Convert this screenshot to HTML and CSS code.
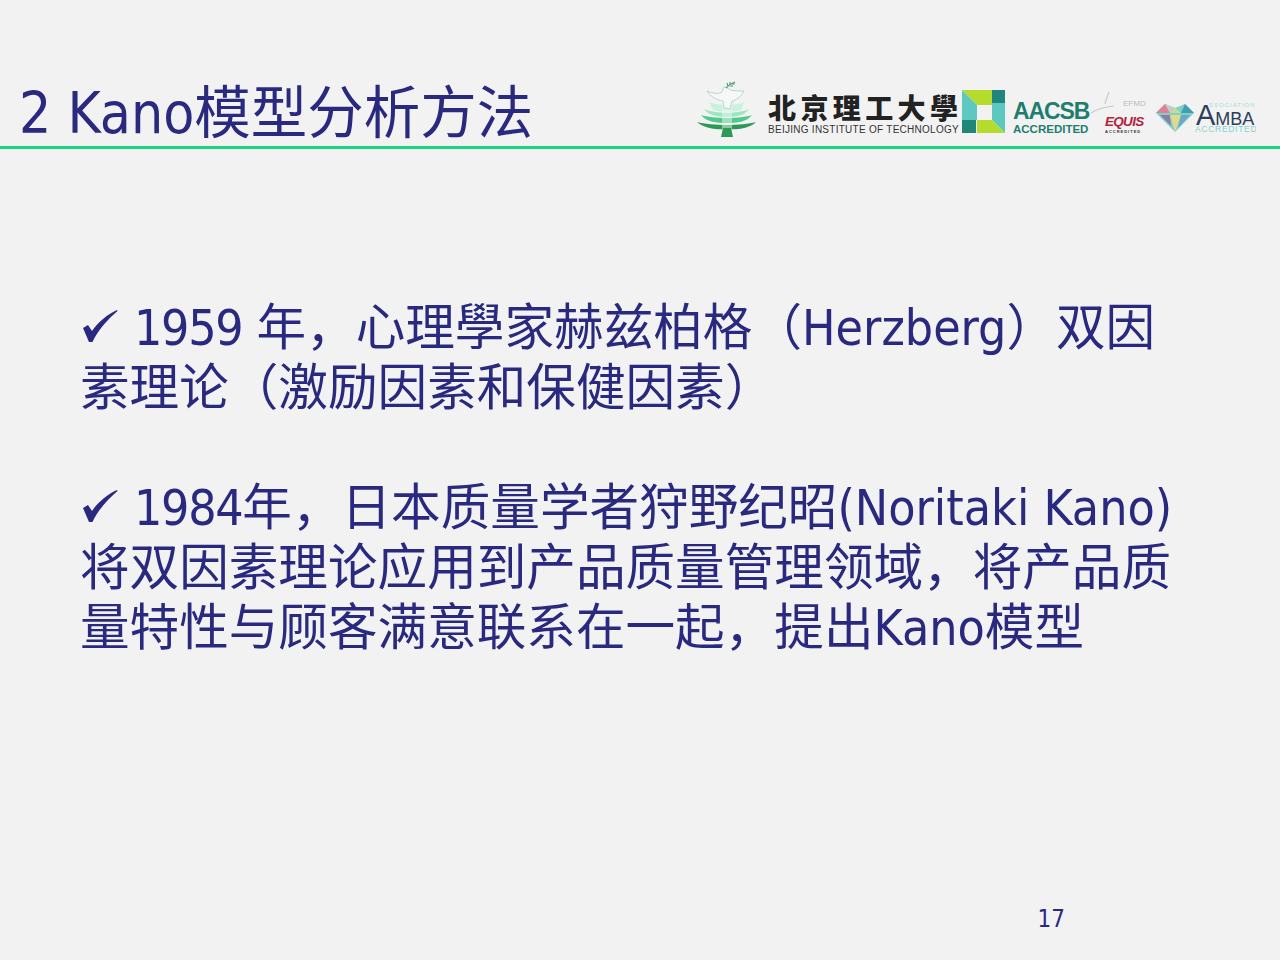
FILE: index.html
```html
<!DOCTYPE html>
<html lang="zh-CN">
<head>
    <meta charset="UTF-8">
    <title>2 Kano模型分析方法</title>
    <link rel="stylesheet" href="styles.css">
</head>
<body>
    <div class="slide">
        <header class="slide-header">
            <h1 class="slide-title">2 Kano模型分析方法</h1>
            <div class="logos">
                <!-- dove and pine tree -->
                <svg class="logo-tree" width="60" height="57" viewBox="0 0 60 57">
                    <path d="M12 21 C20 25 40 25 47 21 L44 29 C38 31 22 31 16 29 Z" fill="#c9f2de"/>
                    <path d="M7 28 C18 33 42 33 52 28 C48 34 40 36 30 36 C20 36 11 34 7 28 Z" fill="#9be6c0"/>
                    <path d="M4 34 C16 38 44 38 55 34 C50 41 40 42 30 42 C20 42 9 41 4 34 Z" fill="#4fca8c"/>
                    <path d="M0 41 C15 45 45 45 59 41 C52 48 38 49 30 48 C22 49 8 48 0 41 Z" fill="#2c9a55"/>
                    <rect x="25" y="24" width="10" height="24" fill="#eaf8f1" fill-opacity="0.5"/>
                    <path d="M26 47 L34 47 L36 56 L24 56 Z" fill="#2c9a55"/>
                    <path d="M10 10 C17 13 22 13 25 11 L27 6 L31 7 C32 10 40 10 47 10 C44 16 39 19 35 20 L33 28 L27 27 L26 20 C19 19 13 15 10 10 Z" fill="#f6f8f7" stroke="#a6cfc0" stroke-width="0.8"/>
                    <path d="M29 7 C32 4 35 2 38 1 M31 5 L30 2 M33 4 L33 1 M33 5 L36 5 M35 3 L38 3" stroke="#4f9f70" stroke-width="1.1" fill="none"/>
                </svg>
                <div class="logo-bit">
                    <div class="bit-cn">北京理工大學</div>
                    <div class="bit-en">BEIJING INSTITUTE OF TECHNOLOGY</div>
                </div>
                <svg class="logo-mark" width="43" height="43" viewBox="0 0 43 43">
                    <polygon points="0,0 30,0 30,15 15,15" fill="#b5dc2c"/>
                    <rect x="30" y="0" width="13" height="13" fill="#22857c"/>
                    <polygon points="30,13 43,13 43,43 30,30" fill="#5cc8c0"/>
                    <polygon points="15,30 30,30 43,43 15,43" fill="#b5dc2c"/>
                    <rect x="0" y="30" width="14" height="13" fill="#22857c"/>
                    <polygon points="0,0 15,15 15,30 0,30" fill="#5cc8c0"/>
                </svg>
                <div class="logo-aacsb">
                    <div class="aacsb-name">AACSB</div>
                    <div class="aacsb-sub">ACCREDITED</div>
                </div>
                <svg class="logo-equis" width="56" height="44" viewBox="0 0 56 44">
                    <path d="M1 23 C7 19 15 17 24 16 M15 14 C16 9 18 5 19 2" stroke="#c9c9c9" stroke-width="1.2" fill="none"/>
                    <text x="33" y="16" class="efmd-text">EFMD</text>
                    <text x="15" y="36" class="equis-text">EQUIS</text>
                    <text x="15" y="43" class="equis-sub">ACCREDITED</text>
                </svg>
                <svg class="logo-amba" width="100" height="32" viewBox="0 0 100 32">
                    <polygon points="0,12 9,3 19,7 29,3 38,12 19,31" fill="#7fd0c8"/>
                    <polygon points="0,12 9,3 14,12" fill="#e07f95"/>
                    <polygon points="9,3 19,7 14,12" fill="#c9c9c9"/>
                    <polygon points="14,12 19,7 25,12" fill="#c9dc8a"/>
                    <polygon points="25,12 29,3 38,12" fill="#3f9fb0"/>
                    <polygon points="4,14 14,14 15,25" fill="#8a7fa8"/>
                    <polygon points="14,14 25,14 19,31" fill="#e4d98a"/>
                    <polygon points="25,14 34,14 22,27" fill="#6aa8c8"/>
                    <text x="53" y="6" class="amba-small">SSOCIATION</text>
                    <text x="40" y="24" class="amba-name"><tspan class="amba-cap">A</tspan>MBA</text>
                    <text x="39" y="31" class="amba-sub">ACCREDITED</text>
                </svg>
            </div>
        </header>

        <main class="content">
            <p class="point">
                <svg class="check" width="54" height="36" viewBox="-3 0 54 36"><path d="M0 18 L5 15 L9 21 C15 12 25 4 34 0 L34.5 1 C25 9 15 20 9.5 32 L6 32 Z"/></svg><span class="num">1959</span> 年，心理學家赫兹柏格（Herzberg）双因素理论（激励因素和保健因素）
            </p>
            <p class="point">
                <svg class="check" width="54" height="36" viewBox="-3 0 54 36"><path d="M0 18 L5 15 L9 21 C15 12 25 4 34 0 L34.5 1 C25 9 15 20 9.5 32 L6 32 Z"/></svg><span class="num">1984</span>年，日本质量学者狩野纪昭(Noritaki Kano)将双因素理论应用到产品质量管理领域，将产品质量特性与顾客满意联系在一起，提出Kano模型
            </p>
        </main>

        <footer class="page-number">17</footer>
    </div>
</body>
</html>
```

FILE: styles.css
```css
body {
    margin: 0;
    background-color: #f2f2f2;
    color: #29297f;
    font-family: "DejaVu Sans Condensed", "Noto Sans CJK SC", sans-serif;
}
.slide {
    height: 960px;
    display: flex;
    flex-direction: column;
    overflow: hidden;
}
.slide-header {
    height: 146px;
    border-bottom: 3px solid #1bd680;
    display: flex;
    justify-content: space-between;
    align-items: flex-end;
    padding: 0 24px 0 19px;
}
.slide-title {
    margin: 0 0 -3px 0;
    font-size: 56.5px;
    font-weight: normal;
    line-height: 70px;
    height: 70px;
}
.logos {
    display: flex;
    align-items: flex-end;
    padding-bottom: 8px;
}
.logo-bit {
    margin-left: 11px;
    width: 194px;
    margin-bottom: 2px;
}
.bit-cn {
    font-family: "Noto Sans CJK SC", sans-serif;
    font-size: 28px;
    font-weight: 900;
    line-height: 32px;
    letter-spacing: 4.4px;
    color: #222;
    white-space: nowrap;
}
.bit-en {
    font-family: "Liberation Sans", sans-serif;
    font-size: 10px;
    line-height: 13px;
    letter-spacing: 0.27px;
    color: #333;
    white-space: nowrap;
}
.logo-mark {
    margin-bottom: 5px;
}
.logo-aacsb {
    margin-left: 8px;
    width: 77px;
    margin-bottom: 3px;
    font-family: "Liberation Sans", sans-serif;
    font-weight: bold;
    color: #1f7d6e;
}
.aacsb-name {
    font-size: 23px;
    line-height: 23px;
    letter-spacing: -1.1px;
}
.aacsb-sub {
    font-size: 11.5px;
    line-height: 12px;
}
.logo-equis {
    margin-bottom: 4px;
}
.efmd-text {
    font: 8px "Liberation Sans", sans-serif;
    fill: #bbbbbb;
}
.equis-text {
    font: italic bold 13.5px "Liberation Sans", sans-serif;
    fill: #b3243f;
    letter-spacing: -0.7px;
}
.equis-sub {
    font: bold 4px "Liberation Sans", sans-serif;
    fill: #333333;
    letter-spacing: 1px;
}
.logo-amba {
    margin-left: 10px;
    margin-bottom: 5px;
}
.amba-small {
    font: 6px "Liberation Sans", sans-serif;
    fill: #a5dcd8;
    letter-spacing: 1px;
}
.amba-name {
    font: 18px "Liberation Sans", sans-serif;
    fill: #2c3e5c;
}
.amba-cap {
    font-size: 29px;
}
.amba-sub {
    font: 8.5px "Liberation Sans", sans-serif;
    fill: #85d2cc;
    letter-spacing: 0.7px;
}
.content {
    padding: 149px 100px 0 80px;
}
.point {
    margin: 0 0 60px 0;
    font-size: 49.6px;
    line-height: 60px;
}
.num {
    letter-spacing: -1.3px;
}
.check {
    vertical-align: -1px;
    fill: #29297f;
}
.page-number {
    margin-top: auto;
    padding: 0 215px 23px 0;
    text-align: right;
    font-size: 24px;
    line-height: 36px;
}
```
